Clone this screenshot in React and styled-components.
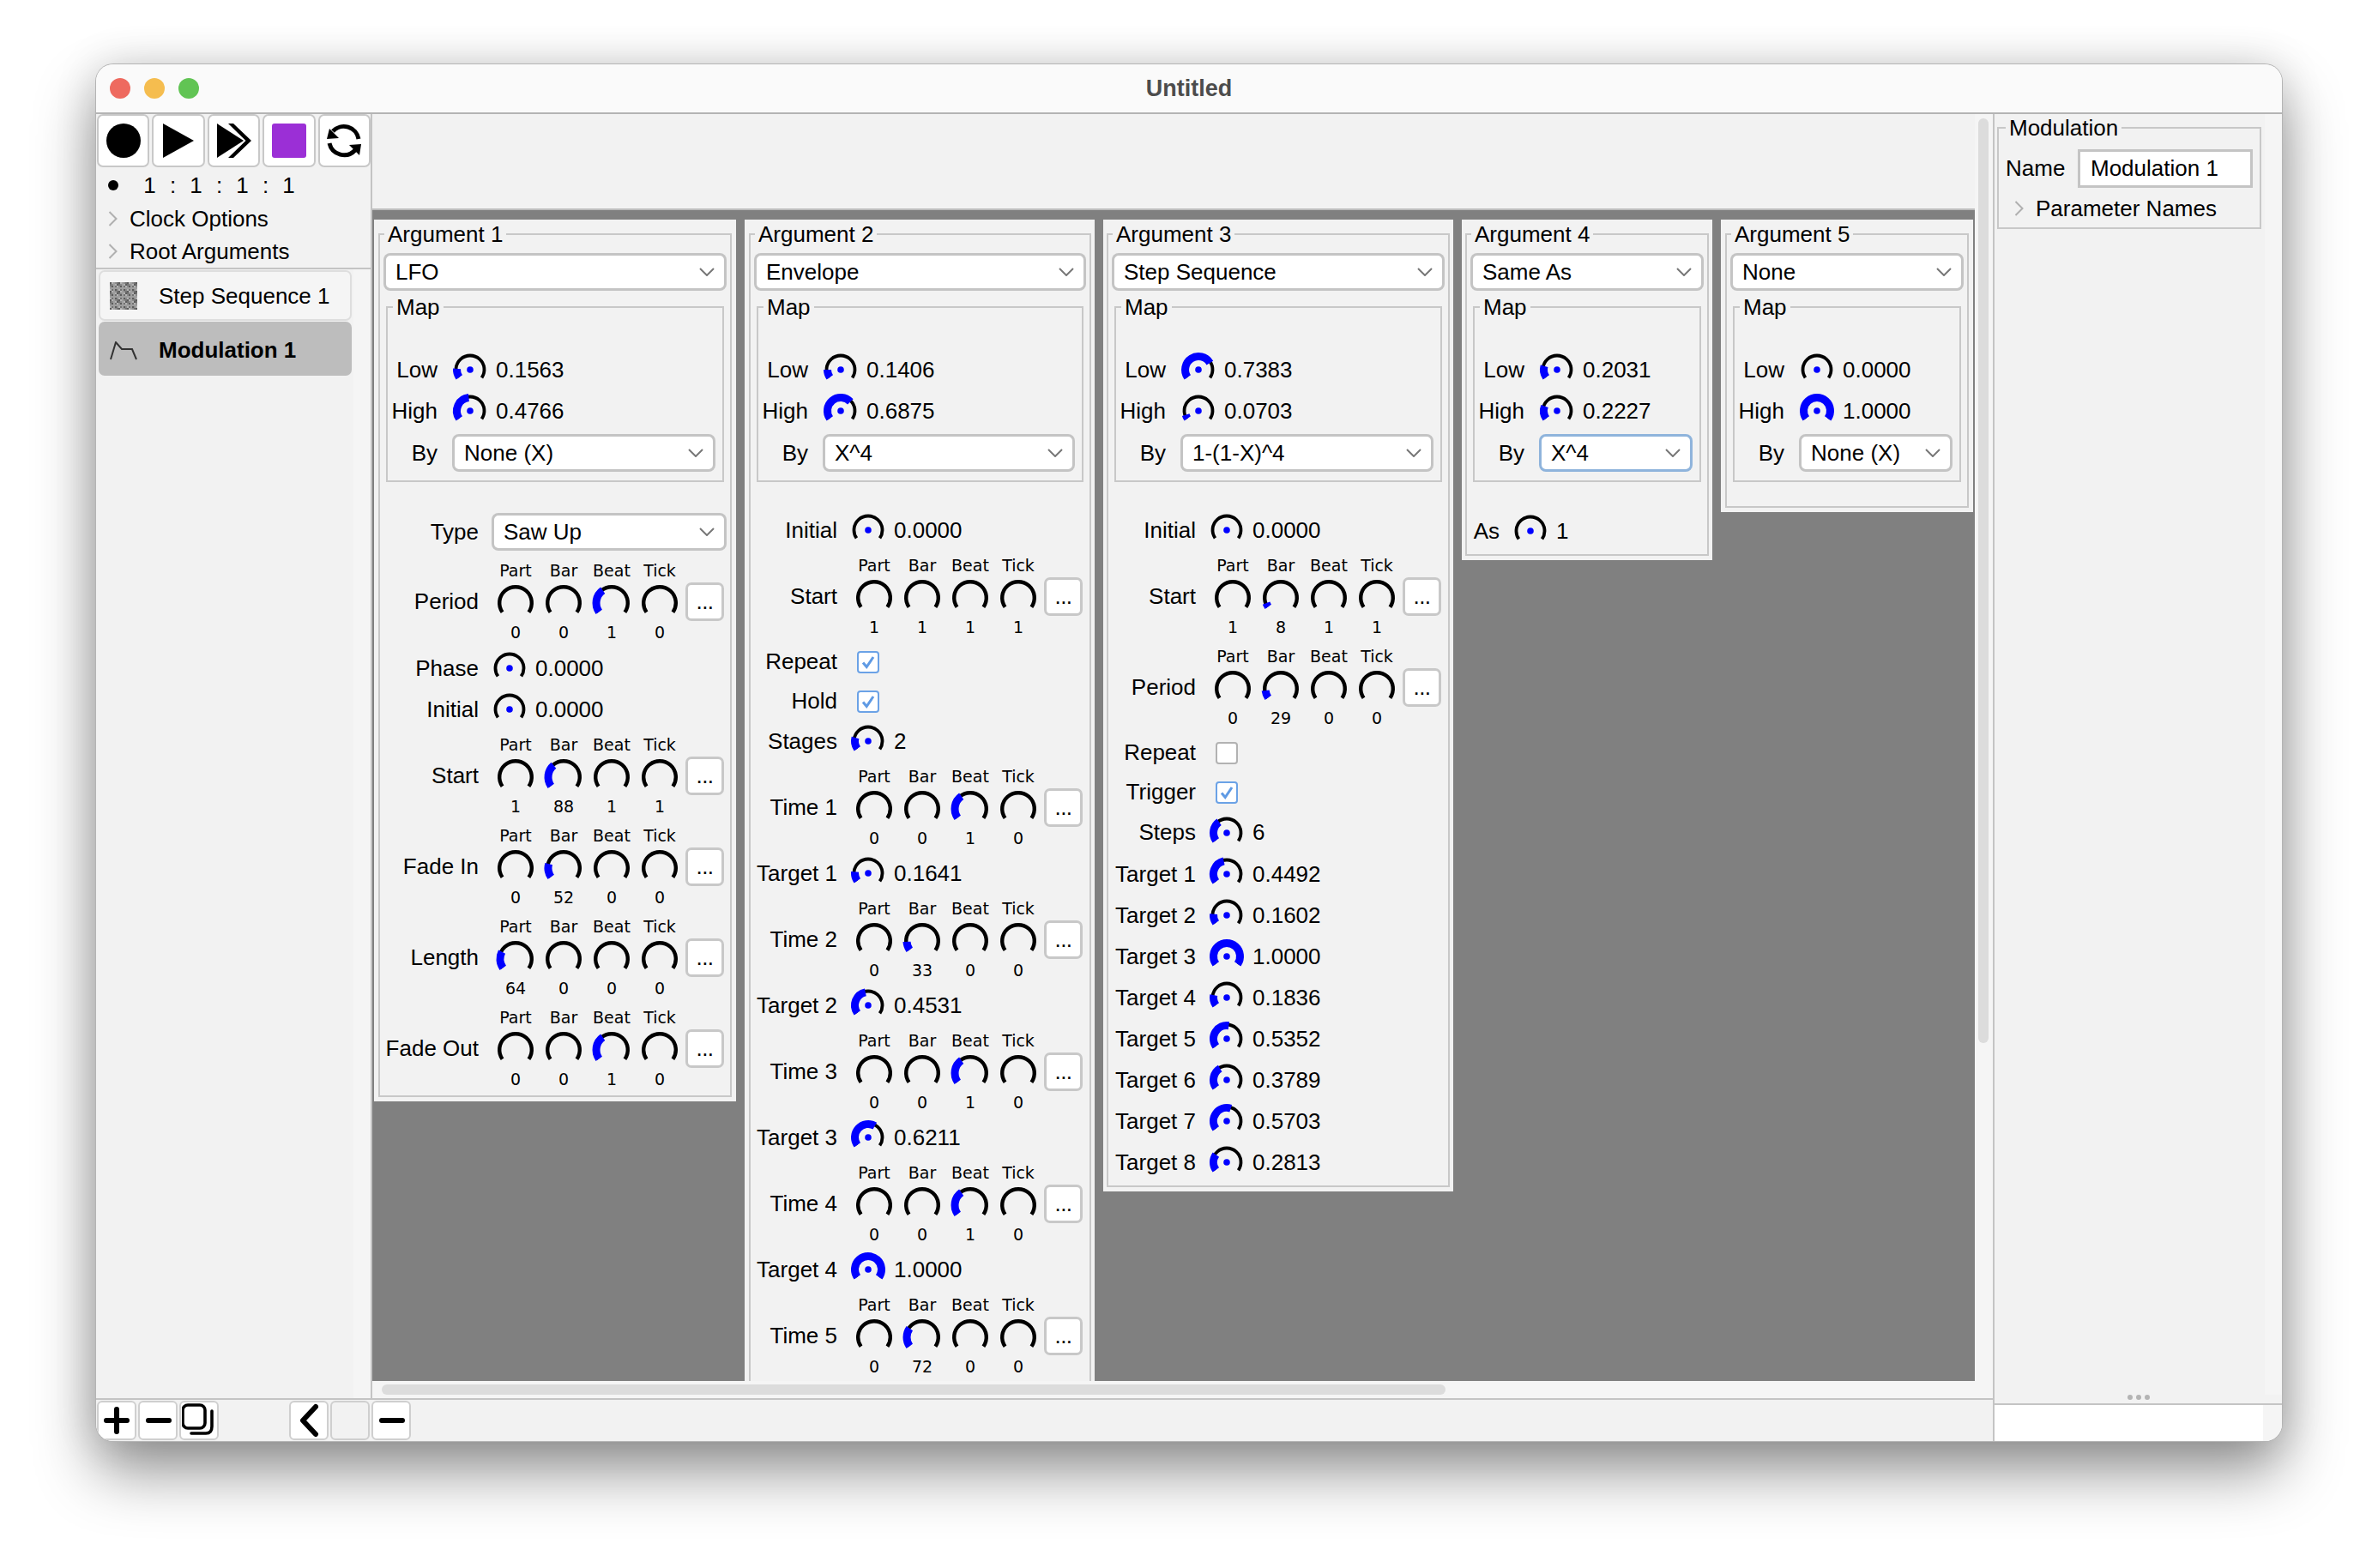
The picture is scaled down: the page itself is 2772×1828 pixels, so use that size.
import styled, { createGlobalStyle } from 'styled-components';

const GlobalStyle = createGlobalStyle`
  html, body {
    margin: 0;
    padding: 0;
    background: #fff;
    overflow: hidden;
  }
  * {
    box-sizing: border-box;
  }
`;

const Page = styled.div`
  width: 2772px;
  height: 1828px;
  padding: 75px 112px 148px;
  font-family: 'Liberation Sans', Arial, sans-serif;
  font-size: 26px;
  color: #000;
`;

const Window = styled.div`
  width: 2548px;
  height: 1605px;
  display: flex;
  flex-direction: column;
  background: #f2f2f2;
  border-radius: 20px;
  overflow: hidden;
  box-shadow: 0 0 0 1px #b4b4b4, 0 36px 70px rgba(0, 0, 0, 0.42), 0 0 50px rgba(0, 0, 0, 0.14);
`;

const TitleBar = styled.div`
  position: relative;
  flex: none;
  height: 58px;
  display: flex;
  align-items: center;
  justify-content: center;
  background: #fafafa;
  border-bottom: 2px solid #b4b4b4;
  font-weight: bold;
  font-size: 27px;
  color: #4c4c4c;
`;

const Lights = styled.div`
  position: absolute;
  left: 16px;
  top: 16px;
  display: flex;
  gap: 16px;
`;

const Light = styled.span`
  width: 24px;
  height: 24px;
  border-radius: 50%;
  background: ${(p) => p.$color};
`;

const Content = styled.div`
  flex: 1;
  min-height: 0;
  display: flex;
`;

const Work = styled.div`
  width: 2211px;
  flex: none;
  display: flex;
  flex-direction: column;
`;

const Top = styled.div`
  flex: 1;
  min-height: 0;
  display: flex;
`;

const Sidebar = styled.div`
  width: 322px;
  flex: none;
  background: #f5f5f5;
  border-right: 2px solid #c4c4c4;
  display: flex;
  flex-direction: column;
`;

const Toolbar = styled.div`
  display: flex;
  gap: 3px;
  padding-left: 1px;
  background: #f2f2f2;
`;

const ToolButton = styled.div`
  width: 62px;
  height: 62px;
  display: flex;
  align-items: center;
  justify-content: center;
  background: #fff;
  border: 2px solid #c8c8c8;
  border-radius: 7px;
`;

const Transport = styled.div`
  height: 41px;
  display: flex;
  align-items: center;
  padding: 2px 0 0 14px;
  background: #f2f2f2;
`;

const ClockDot = styled.span`
  width: 12px;
  height: 12px;
  border-radius: 50%;
  background: #000;
  margin-right: 23px;
  margin-top: -2px;
`;

const ClockCell = styled.span`
  width: 27px;
  text-align: center;
`;

const TreeRow = styled.div`
  height: 38px;
  display: flex;
  align-items: center;
  padding-left: 14px;
  gap: 14px;
  background: #f2f2f2;
`;

const SideRule = styled.div`
  height: 2px;
  background: #c4c4c4;
`;

const ModuleList = styled.div`
  flex: 1;
  width: 300px;
  background: #f2f2f2;
  padding: 1px 0 0 3px;
  display: flex;
  flex-direction: column;
  gap: 1px;
`;

const ModuleItem = styled.div`
  width: 295px;
  height: ${(p) => (p.$active ? 63 : 59)}px;
  display: flex;
  align-items: center;
  gap: 25px;
  padding: ${(p) => (p.$active ? '4px 0 0 13px' : '1px 0 0 11px')};
  border-radius: 7px;
  font-weight: ${(p) => (p.$active ? 'bold' : 'normal')};
  background: ${(p) => (p.$active ? '#bdbdbd' : '#f5f5f5')};
  border: ${(p) => (p.$active ? 'none' : '2px solid #dedede')};
`;

const MainPane = styled.div`
  flex: 1;
  min-width: 0;
  display: flex;
  background: #f5f5f5;
`;

const MainColumn = styled.div`
  width: 1868px;
  flex: none;
  display: flex;
  flex-direction: column;
`;

const Header = styled.div`
  flex: none;
  height: 112px;
  background: #f2f2f2;
  border-bottom: 2px solid #bdbdbd;
`;

const Canvas = styled.div`
  flex: 1;
  min-height: 0;
  overflow: hidden;
  display: flex;
  align-items: flex-start;
  gap: 10px;
  padding: 11px 0 0 2px;
  background: #808080;
`;

const HBar = styled.div`
  flex: none;
  height: 20px;
  padding: 4px 0 0 11px;
  background: #f5f5f5;
`;

const HThumb = styled.div`
  width: 1240px;
  height: 12px;
  border-radius: 6px;
  background: #dcdcdc;
`;

const VBar = styled.div`
  flex: 1;
  padding: 5px 0 0 4px;
`;

const VThumb = styled.div`
  width: 12px;
  height: 1078px;
  border-radius: 6px;
  background: #dcdcdc;
`;

const BottomBar = styled.div`
  flex: none;
  height: 50px;
  display: flex;
  gap: 2px;
  padding: 1px 0 0 1px;
  background: #f2f2f2;
  border-top: 2px solid #c4c4c4;
`;

const BarButton = styled.div`
  width: 46px;
  height: 46px;
  display: flex;
  align-items: center;
  justify-content: center;
  background: ${(p) => (p.$blank ? '#f2f2f2' : '#fff')};
  border: 2px solid #cfcfcf;
  border-radius: 6px;
  margin-left: ${(p) => p.$gap || 0}px;
`;

const Column = styled.div`
  --label-w: ${(p) => p.$labelW || 40}px;
  flex: none;
  width: ${(p) => p.$w}px;
  padding: 2px ${(p) => p.$pr}px 5px ${(p) => p.$pl}px;
  background: #f2f2f2;
`;

const Group = styled.fieldset`
  margin: 0;
  min-width: 0;
  padding: 7px 4px ${(p) => p.$pb || 0}px;
  border: 2px solid #c8c8c8;
`;

const Legend = styled.legend`
  margin-left: 1px;
  padding: 0 4px;
  line-height: 30px;
`;

const MapGroup = styled.fieldset`
  margin: 5px 3px 0;
  min-width: 0;
  padding: 34px 8px 10px 0;
  border: 2px solid #c8c8c8;
`;

const MapLegend = styled(Legend)`
  margin-left: 6px;
`;

const Combo = styled.div`
  flex: ${(p) => (p.$grow ? 1 : 'none')};
  min-width: 0;
  height: 42px;
  display: flex;
  align-items: center;
  justify-content: space-between;
  padding: 0 11px 0 11px;
  background: #fff;
  border: 2px solid ${(p) => (p.$focus ? '#8fb4dc' : '#c4c4c4')};
  border-radius: 7px;
  box-shadow: ${(p) => (p.$focus ? '0 0 0 1px #8fb4dc' : '0 0 0 1px #c4c4c4')};
  margin: 1px;
`;

const Row = styled.div`
  height: ${(p) => p.$h || 48}px;
  margin-top: ${(p) => p.$mt || 0}px;
  display: flex;
  align-items: center;
`;

const Label = styled.span`
  flex: none;
  width: var(--label-w);
  text-align: right;
  white-space: nowrap;
`;

const MapLabel = styled(Label)`
  width: 58px;
`;

const KnobCell = styled.div`
  flex: none;
  width: 40px;
  margin-left: ${(p) => p.$ml}px;
  margin-right: 10px;
  display: flex;
  justify-content: center;
`;

const BoxCell = styled(KnobCell)`
  margin-top: 1px;
`;

const Check = styled.div`
  width: 26px;
  height: 26px;
  display: flex;
  align-items: center;
  justify-content: center;
  background: #fff;
  border: 2px solid ${(p) => (p.$on ? '#6ba2e6' : '#b2b2b2')};
  border-radius: 4px;
`;

const TimeGrid = styled.div`
  flex: none;
  width: 224px;
  margin-left: 15px;
  display: grid;
  grid-template-columns: repeat(4, 56px);
`;

const TimeCell = styled.div`
  height: 106px;
  padding-top: 5px;
  display: flex;
  flex-direction: column;
  align-items: center;
  font-family: 'DejaVu Sans', sans-serif;
  font-size: 19px;
`;

const Caption = styled.span`
  height: 24px;
  line-height: 24px;
  margin-bottom: 4px;
`;

const Amount = styled.span`
  height: 24px;
  line-height: 24px;
`;

const MoreButton = styled.div`
  flex: none;
  width: 45px;
  height: 45px;
  margin-left: 2px;
  display: flex;
  align-items: center;
  justify-content: center;
  background: #fff;
  border: 3px solid #c8c8c8;
  border-radius: 7px;
  letter-spacing: -0.5px;
`;

const RightPane = styled.div`
  flex: 1;
  min-width: 0;
  display: flex;
  flex-direction: column;
  background: #f5f5f5;
  border-left: 2px solid #c4c4c4;
`;

const Inspector = styled.div`
  flex: 1;
  width: 315px;
  padding: 1px 0 0 3px;
  background: #f2f2f2;
`;

const InspectorGroup = styled.fieldset`
  width: 308px;
  margin: 0;
  min-width: 0;
  padding: 10px 8px 0;
  border: 2px solid #c8c8c8;
`;

const InspectorLegend = styled(Legend)`
  margin-left: 0;
`;

const NameRow = styled.div`
  display: flex;
  align-items: center;
  justify-content: space-between;
`;

const NameField = styled.div`
  width: 204px;
  height: 45px;
  display: flex;
  align-items: center;
  padding-left: 12px;
  background: #fff;
  border: 3px solid #c4c4c4;
`;

const SubTree = styled(TreeRow)`
  height: 46px;
  background: transparent;
  padding: 2px 0 0 10px;
`;

const Dots = styled.div`
  flex: none;
  height: 10px;
  display: flex;
  justify-content: center;
  gap: 4px;
  background: #f2f2f2;
`;

const Dot = styled.span`
  width: 6px;
  height: 6px;
  border-radius: 50%;
  background: #b4b4b4;
`;

const Status = styled.div`
  flex: none;
  height: 44px;
  background: #f5f5f5;
  border-top: 2px solid #c4c4c4;
`;

const StatusFill = styled.div`
  width: 313px;
  height: 100%;
  background: #fff;
`;

const BySpace = styled.span`
  flex: none;
  width: 17px;
`;

const TypeGap = styled.span`
  flex: none;
  width: 15px;
`;

function polar(r, deg) {
  const a = (deg * Math.PI) / 180;
  return [(22 + r * Math.sin(a)).toFixed(2), (22 - r * Math.cos(a)).toFixed(2)];
}

function arc(r, from, to) {
  const [x1, y1] = polar(r, from);
  const [x2, y2] = polar(r, to);
  return `M${x1} ${y1}A${r} ${r} 0 ${to - from > 180 ? 1 : 0} 1 ${x2} ${y2}`;
}

const SWEEP = 125;

function Knob({ big, value = 0 }) {
  const end = -SWEEP + 2 * SWEEP * value;
  return (
    <svg width="44" height="44" viewBox="0 0 44 44" overflow="visible">
      <path d={arc(big ? 18.8 : 16.5, -SWEEP, SWEEP)} fill="none" stroke="#000" strokeWidth={big ? 4.4 : 3.8} />
      {value > 0 && (
        <path d={arc(big ? 18 : 15.5, -SWEEP, end)} fill="none" stroke="#0000ff" strokeWidth={9} />
      )}
      {!big && <circle cx="22" cy="22" r="3.8" fill="#0000ff" />}
    </svg>
  );
}

function Chevron({ w = 18, h = 10, color = '#777' }) {
  return (
    <svg width={w} height={h} viewBox={`0 0 ${w} ${h}`}>
      <path d={`M1 1L${w / 2} ${h - 1}L${w - 1} 1`} fill="none" stroke={color} strokeWidth="2" />
    </svg>
  );
}

function TreeArrow() {
  return (
    <svg width="11" height="18" viewBox="0 0 11 18">
      <path d="M1.5 1L9.5 9L1.5 17" fill="none" stroke="#b0b0b0" strokeWidth="2" />
    </svg>
  );
}

function Select({ children, grow, focus }) {
  return (
    <Combo $grow={grow} $focus={focus}>
      <span>{children}</span>
      <Chevron />
    </Combo>
  );
}

function Param({ label, value, text, h, mt }) {
  return (
    <Row $h={h} $mt={mt}>
      <Label>{label}</Label>
      <KnobCell $ml={16}>
        <Knob value={value} />
      </KnobCell>
      <span>{text}</span>
    </Row>
  );
}

function Toggle({ label, on, h }) {
  return (
    <Row $h={h}>
      <Label>{label}</Label>
      <BoxCell $ml={16}>
        <Check $on={on}>
          {on && (
            <svg width="18" height="18" viewBox="0 0 18 18">
              <path d="M3 9.5L7.2 14.5L15 3" fill="none" stroke="#5f9ae4" strokeWidth="3" />
            </svg>
          )}
        </Check>
      </BoxCell>
    </Row>
  );
}

const UNITS = ['Part', 'Bar', 'Beat', 'Tick'];

// origin: a start time counts from 1, so 1 sits at the bottom of the dial
function timeFraction(unit, shown, origin) {
  const n = shown - origin;
  if (n <= 0) return 0;
  if (unit === 'Beat') return 0.36;
  return Math.max(n / 256, 0.06);
}

function Time({ label, values, mt, origin = 0 }) {
  return (
    <Row $h={106} $mt={mt}>
      <Label>{label}</Label>
      <TimeGrid>
        {UNITS.map((unit, i) => (
          <TimeCell key={unit}>
            <Caption>{unit}</Caption>
            <Knob big value={timeFraction(unit, values[i], origin)} />
            <Amount>{values[i]}</Amount>
          </TimeCell>
        ))}
      </TimeGrid>
      <MoreButton>...</MoreButton>
    </Row>
  );
}

function MapBox({ low, high, by, focus }) {
  return (
    <MapGroup>
      <MapLegend>Map</MapLegend>
      <Row>
        <MapLabel>Low</MapLabel>
        <KnobCell $ml={18}>
          <Knob value={low} />
        </KnobCell>
        <span>{low.toFixed(4)}</span>
      </Row>
      <Row>
        <MapLabel>High</MapLabel>
        <KnobCell $ml={18}>
          <Knob value={high} />
        </KnobCell>
        <span>{high.toFixed(4)}</span>
      </Row>
      <Row $h={44} $mt={3}>
        <MapLabel>By</MapLabel>
        <BySpace />
        <Select grow focus={focus}>
          {by}
        </Select>
      </Row>
    </MapGroup>
  );
}

const targets = (list) => list.map((v, i) => <Param key={i} label={`Target ${i + 1}`} value={v} text={v.toFixed(4)} />);

function StepIcon() {
  const cells = [];
  for (let y = 0; y < 16; y++) {
    for (let x = 0; x < 16; x++) {
      const n = (x * 7 + y * 13 + x * y) % 5;
      const shade = ['#5c5c5c', '#8c8c8c', '#b4b4b4', '#727272', '#9e9e9e'][n];
      cells.push(<rect key={`${x}-${y}`} x={x * 2} y={y * 2} width="2" height="2" fill={shade} />);
    }
  }
  return (
    <svg width="32" height="32" viewBox="0 0 32 32">
      {cells}
    </svg>
  );
}

function EnvelopeIcon() {
  return (
    <svg width="32" height="22" viewBox="0 0 32 22">
      <path d="M1 21L7 1L14 9L26 9L31 21" fill="none" stroke="#333" strokeWidth="2" />
    </svg>
  );
}

function BarIcon({ d, w = 34, h = 40, sw = 6 }) {
  return (
    <svg width={w} height={h} viewBox={`0 0 ${w} ${h}`}>
      <path d={d} fill="none" stroke="#000" strokeWidth={sw} strokeLinecap="round" strokeLinejoin="round" />
    </svg>
  );
}

export default function App() {
  return (
    <Page>
      <GlobalStyle />
      <Window>
        <TitleBar>
          <Lights>
            <Light $color="#ee6a5f" />
            <Light $color="#f5bd4f" />
            <Light $color="#61c454" />
          </Lights>
          Untitled
        </TitleBar>
        <Content>
          <Work>
            <Top>
              <Sidebar>
                <Toolbar>
                  <ToolButton>
                    <svg width="40" height="40" viewBox="0 0 40 40">
                      <circle cx="20" cy="20" r="20" fill="#000" />
                    </svg>
                  </ToolButton>
                  <ToolButton>
                    <svg width="40" height="40" viewBox="0 0 40 40">
                      <path d="M2 0L38 20L2 40Z" fill="#000" />
                    </svg>
                  </ToolButton>
                  <ToolButton>
                    <svg width="40" height="40" viewBox="0 0 40 40">
                      <path d="M0 0L31 20L0 40Z" fill="#000" />
                      <path d="M13 0L19 0L40 20L19 40L13 40L33.5 20Z" fill="#000" />
                    </svg>
                  </ToolButton>
                  <ToolButton>
                    <svg width="40" height="40" viewBox="0 0 40 40">
                      <rect width="40" height="40" rx="3" fill="#9b2fd6" />
                    </svg>
                  </ToolButton>
                  <ToolButton>
                    <svg width="40" height="40" viewBox="0 0 40 40">
                      <path d="M37 18A17.5 17.5 0 0 0 7 9" fill="none" stroke="#000" strokeWidth="5" />
                      <path d="M3 23A17.5 17.5 0 0 0 33 31" fill="none" stroke="#000" strokeWidth="5" />
                      <path d="M0 18L14 17L3 6Z" fill="#000" />
                      <path d="M40 24L26 25L38 37Z" fill="#000" />
                    </svg>
                  </ToolButton>
                </Toolbar>
                <Transport>
                  <ClockDot />
                  {['1', ':', '1', ':', '1', ':', '1'].map((c, i) => (
                    <ClockCell key={i}>{c}</ClockCell>
                  ))}
                </Transport>
                <TreeRow>
                  <TreeArrow />
                  Clock Options
                </TreeRow>
                <TreeRow>
                  <TreeArrow />
                  Root Arguments
                </TreeRow>
                <SideRule />
                <ModuleList>
                  <ModuleItem>
                    <StepIcon />
                    Step Sequence 1
                  </ModuleItem>
                  <ModuleItem $active>
                    <EnvelopeIcon />
                    Modulation 1
                  </ModuleItem>
                </ModuleList>
              </Sidebar>
              <MainPane>
                <MainColumn>
                  <Header />
                  <Canvas>
                    <Column $w={422} $pl={5} $pr={5} $labelW={111}>
                      <Group $pb={2}>
                        <Legend>Argument 1</Legend>
                        <Select>LFO</Select>
                        <MapBox low={0.1563} high={0.4766} by="None (X)" />
                        <Row $mt={34}>
                          <Label>Type</Label>
                          <TypeGap />
                          <Select grow>Saw Up</Select>
                        </Row>
                        <Time label="Period" values={[0, 0, 1, 0]} mt={4} />
                        <Param label="Phase" value={0} text="0.0000" mt={1} />
                        <Param label="Initial" value={0} text="0.0000" />
                        <Time label="Start" values={[1, 88, 1, 1]} origin={1} />
                        <Time label="Fade In" values={[0, 52, 0, 0]} />
                        <Time label="Length" values={[64, 0, 0, 0]} />
                        <Time label="Fade Out" values={[0, 0, 1, 0]} />
                      </Group>
                    </Column>
                    <Column $w={408} $pl={5} $pr={4} $labelW={97}>
                      <Group>
                        <Legend>Argument 2</Legend>
                        <Select>Envelope</Select>
                        <MapBox low={0.1406} high={0.6875} by="X^4" />
                        <Param label="Initial" value={0} text="0.0000" mt={32} />
                        <Time label="Start" values={[1, 1, 1, 1]} origin={1} />
                        <Toggle label="Repeat" on h={46} />
                        <Toggle label="Hold" on h={46} />
                        <Param label="Stages" value={0.2} text="2" h={48} />
                        <Time label="Time 1" values={[0, 0, 1, 0]} />
                        <Param label="Target 1" value={0.1641} text="0.1641" />
                        <Time label="Time 2" values={[0, 33, 0, 0]} />
                        <Param label="Target 2" value={0.4531} text="0.4531" />
                        <Time label="Time 3" values={[0, 0, 1, 0]} />
                        <Param label="Target 3" value={0.6211} text="0.6211" />
                        <Time label="Time 4" values={[0, 0, 1, 0]} />
                        <Param label="Target 4" value={1} text="1.0000" />
                        <Time label="Time 5" values={[0, 72, 0, 0]} />
                      </Group>
                    </Column>
                    <Column $w={408} $pl={4} $pr={4} $labelW={98}>
                      <Group $pb={3}>
                        <Legend>Argument 3</Legend>
                        <Select>Step Sequence</Select>
                        <MapBox low={0.7383} high={0.0703} by="1-(1-X)^4" />
                        <Param label="Initial" value={0} text="0.0000" mt={32} />
                        <Time label="Start" values={[1, 8, 1, 1]} origin={1} />
                        <Time label="Period" values={[0, 29, 0, 0]} />
                        <Toggle label="Repeat" h={46} />
                        <Toggle label="Trigger" on h={46} />
                        <Param label="Steps" value={0.36} text="6" h={49} />
                        {targets([0.4492, 0.1602, 1, 0.1836, 0.5352, 0.3789, 0.5703, 0.2813])}
                      </Group>
                    </Column>
                    <Column $w={292} $pl={4} $pr={4} $labelW={34}>
                      <Group $pb={3}>
                        <Legend>Argument 4</Legend>
                        <Select>Same As</Select>
                        <MapBox low={0.2031} high={0.2227} by="X^4" focus />
                        <Param label="As" value={0} text="1" mt={33} />
                      </Group>
                    </Column>
                    <Column $w={294} $pl={5} $pr={5}>
                      <Group $pb={28}>
                        <Legend>Argument 5</Legend>
                        <Select>None</Select>
                        <MapBox low={0} high={1} by="None (X)" />
                      </Group>
                    </Column>
                  </Canvas>
                  <HBar>
                    <HThumb />
                  </HBar>
                </MainColumn>
                <VBar>
                  <VThumb />
                </VBar>
              </MainPane>
            </Top>
            <BottomBar>
              <BarButton>
                <BarIcon d="M17 7V33M5 20H29" />
              </BarButton>
              <BarButton>
                <BarIcon d="M6 20H30" />
              </BarButton>
              <BarButton>
                <svg width="40" height="40" viewBox="0 0 40 40">
                  <rect x="1" y="2" width="26" height="27" rx="6" fill="none" stroke="#000" strokeWidth="3.6" />
                  <path d="M35 9V27Q35 35 28 35H11" fill="none" stroke="#000" strokeWidth="3.6" strokeLinecap="round" />
                </svg>
              </BarButton>
              <BarButton $gap={80}>
                <BarIcon d="M25 4L10 20L25 36" sw={6} />
              </BarButton>
              <BarButton $blank />
              <BarButton>
                <BarIcon d="M6 20H30" />
              </BarButton>
            </BottomBar>
          </Work>
          <RightPane>
            <Inspector>
              <InspectorGroup>
                <InspectorLegend>Modulation</InspectorLegend>
                <NameRow>
                  <span>Name</span>
                  <NameField>Modulation 1</NameField>
                </NameRow>
                <SubTree>
                  <TreeArrow />
                  Parameter Names
                </SubTree>
              </InspectorGroup>
            </Inspector>
            <Dots>
              <Dot />
              <Dot />
              <Dot />
            </Dots>
            <Status>
              <StatusFill />
            </Status>
          </RightPane>
        </Content>
      </Window>
    </Page>
  );
}
